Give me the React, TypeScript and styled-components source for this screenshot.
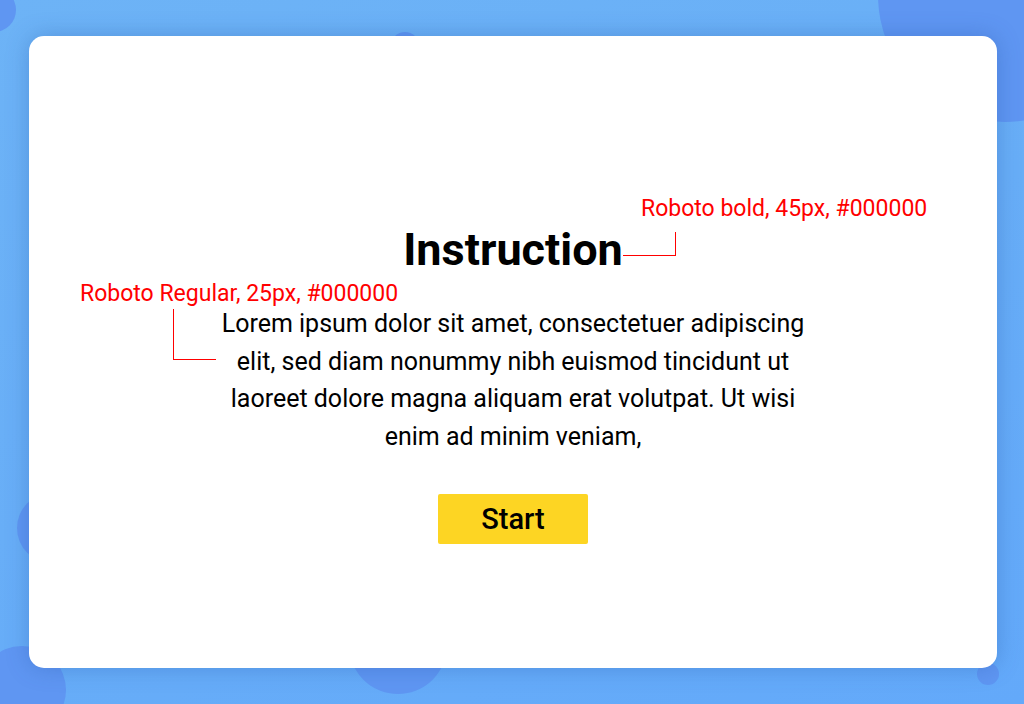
import React from "react";
import styled, { createGlobalStyle } from "styled-components";

const Global = createGlobalStyle`
  html, body { margin: 0; padding: 0; }
  body { font-family: Roboto, "Liberation Sans", sans-serif; }
`;

const Screen = styled.div`
  position: relative;
  width: 1024px;
  height: 704px;
  overflow: hidden;
  background: linear-gradient(160deg, #6db3f6 0%, #68aef7 50%, #63a9fa 100%);
  padding: 36px 27px 36px 29px;
  box-sizing: border-box;
`;

const Bubble = styled.div<{ $x: number; $y: number; $r: number }>`
  position: absolute;
  left: ${(p) => p.$x - p.$r}px;
  top: ${(p) => p.$y - p.$r}px;
  width: ${(p) => p.$r * 2}px;
  height: ${(p) => p.$r * 2}px;
  border-radius: 50%;
  background: #5f96f2;
`;

const Card = styled.div`
  position: relative;
  z-index: 1;
  height: 632px;
  background: #ffffff;
  border-radius: 15px;
  box-shadow: 0 0 22px rgba(40, 90, 170, 0.35);
  display: flex;
  flex-direction: column;
  align-items: center;
  padding-top: 187px;
  box-sizing: border-box;
`;

const Title = styled.h1`
  margin: 0;
  font-family: Roboto, "Liberation Sans", sans-serif;
  font-weight: 700;
  font-size: 45px;
  line-height: 54px;
  color: #000000;
`;

const Body = styled.p`
  margin: 28px 0 0;
  width: 600px;
  text-align: center;
  font-family: Roboto, "Liberation Sans", sans-serif;
  font-weight: 400;
  font-size: 25px;
  line-height: 37.5px;
  color: #000000;
`;

const StartButton = styled.button`
  margin-top: 39px;
  width: 150px;
  height: 50px;
  border: none;
  border-radius: 2px;
  background: #fdd523;
  font-family: Roboto, "Liberation Sans", sans-serif;
  font-weight: 500;
  font-size: 29px;
  color: #000000;
  padding: 0;
  cursor: pointer;
`;

const Note = styled.div<{ $left: number; $top: number }>`
  position: absolute;
  left: ${(p) => p.$left}px;
  top: ${(p) => p.$top}px;
  font-family: Roboto, "Liberation Sans", sans-serif;
  font-size: 23px;
  line-height: 28px;
  color: #ff0000;
  white-space: nowrap;
`;

const Connector = styled.div<{ $left: number; $top: number; $w: number; $h: number; $side: "left" | "right" }>`
  position: absolute;
  left: ${(p) => p.$left}px;
  top: ${(p) => p.$top}px;
  width: ${(p) => p.$w}px;
  height: ${(p) => p.$h}px;
  border-bottom: 1px solid #ff0000;
  ${(p) => (p.$side === "left" ? "border-left" : "border-right")}: 1px solid #ff0000;
  box-sizing: border-box;
`;

export default function App() {
  return (
    <>
      <Global />
      <Screen>
        <Bubble $x={-6} $y={10} $r={22} />
        <Bubble $x={1005} $y={-5} $r={127} />
        <Bubble $x={405} $y={46} $r={14} />
        <Bubble $x={52} $y={528} $r={35} />
        <Bubble $x={22} $y={690} $r={44} />
        <Bubble $x={398} $y={645} $r={49} />
        <Bubble $x={988} $y={674} $r={11} />
        <Card>
          <Title>Instruction</Title>
          <Body>
            Lorem ipsum dolor sit amet, consectetuer adipiscing elit, sed diam nonummy nibh euismod tincidunt ut
            laoreet dolore magna aliquam erat volutpat. Ut wisi enim ad minim veniam,
          </Body>
          <StartButton>Start</StartButton>
          <Note $left={612} $top={159}>Roboto bold, 45px, #000000</Note>
          <Connector $left={594} $top={196} $w={53} $h={24} $side="right" />
          <Note $left={51} $top={244}>Roboto Regular, 25px, #000000</Note>
          <Connector $left={144} $top={273} $w={43} $h={51} $side="left" />
        </Card>
      </Screen>
    </>
  );
}
